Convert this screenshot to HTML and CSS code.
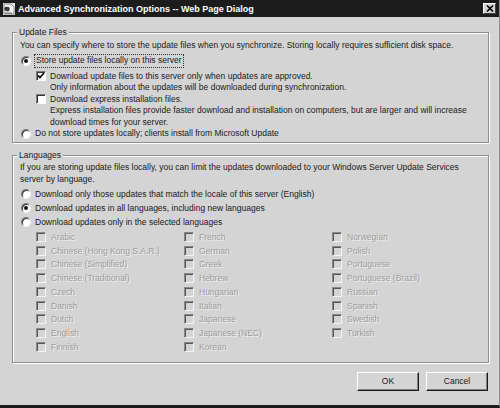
FILE: index.html
```html
<!DOCTYPE html>
<html lang="en">
<head>
    <meta charset="UTF-8">
    <title>Advanced Synchronization Options</title>
    <link rel="stylesheet" href="styles.css">
</head>

<body>
    <div class="dialog">
        <div class="titlebar">
            <svg class="app-icon" width="12" height="12" viewBox="0 0 12 12">
                <rect x="0" y="0" width="12" height="12" fill="#e4e4e4"/>
                <path d="M1 1h7l3 3v7H1z" fill="#f4f4f4" stroke="#8a8a8a" stroke-width="1"/>
                <path d="M2 6c0-2 4-2 4 0H2c0 2 3 2 4 1" fill="none" stroke="#333" stroke-width="1.4"/>
                <path d="M2 10h7" stroke="#666" stroke-width="1"/>
            </svg>
            <span class="title">Advanced Synchronization Options -- Web Page Dialog</span>
            <span class="close">
                <svg width="8" height="7" viewBox="0 0 8 7">
                    <path d="M1 0.5l6 6M7 0.5l-6 6" stroke="#000" stroke-width="1.6"/>
                </svg>
            </span>
        </div>

        <div class="content">
            <fieldset class="group files">
                <legend>Update Files</legend>
                <p class="line">You can specify where to store the update files when you synchronize. Storing locally requires sufficient disk space.</p>
                <div class="opt first">
                    <span class="radio on"></span>
                    <span class="focus">Store update files locally on this server</span>
                </div>
                <div class="sub first">
                    <span class="check on">
                        <svg width="8" height="8" viewBox="0 0 8 8"><path d="M1 3.5l2 2 4-4.5" fill="none" stroke="#000" stroke-width="1.6"/></svg>
                    </span>
                    <span>Download update files to this server only when updates are approved.</span>
                </div>
                <p class="note">Only information about the updates will be downloaded during synchronization.</p>
                <div class="sub">
                    <span class="check"></span>
                    <span>Download express installation files.</span>
                </div>
                <p class="note">Express installation files provide faster download and installation on computers, but are larger and will increase<br>download times for your server.</p>
                <div class="opt">
                    <span class="radio"></span>
                    <span>Do not store updates locally; clients install from Microsoft Update</span>
                </div>
            </fieldset>

            <fieldset class="group languages">
                <legend>Languages</legend>
                <p class="line">If you are storing update files locally, you can limit the updates downloaded to your Windows Server Update Services<br>server by language.</p>
                <div class="choices">
                    <div class="opt"><span class="radio"></span><span>Download only those updates that match the locale of this server (English)</span></div>
                    <div class="opt"><span class="radio on"></span><span>Download updates in all languages, including new languages</span></div>
                    <div class="opt"><span class="radio"></span><span>Download updates only in the selected languages</span></div>
                </div>
                <div class="lang-grid">
                    <div class="lang"><span class="check off"></span>Arabic</div>
                    <div class="lang"><span class="check off"></span>Chinese (Hong Kong S.A.R.)</div>
                    <div class="lang"><span class="check off"></span>Chinese (Simplified)</div>
                    <div class="lang"><span class="check off"></span>Chinese (Traditional)</div>
                    <div class="lang"><span class="check off"></span>Czech</div>
                    <div class="lang"><span class="check off"></span>Danish</div>
                    <div class="lang"><span class="check off"></span>Dutch</div>
                    <div class="lang"><span class="check off"></span>English</div>
                    <div class="lang"><span class="check off"></span>Finnish</div>
                    <div class="lang"><span class="check off"></span>French</div>
                    <div class="lang"><span class="check off"></span>German</div>
                    <div class="lang"><span class="check off"></span>Greek</div>
                    <div class="lang"><span class="check off"></span>Hebrew</div>
                    <div class="lang"><span class="check off"></span>Hungarian</div>
                    <div class="lang"><span class="check off"></span>Italian</div>
                    <div class="lang"><span class="check off"></span>Japanese</div>
                    <div class="lang"><span class="check off"></span>Japanese (NEC)</div>
                    <div class="lang"><span class="check off"></span>Korean</div>
                    <div class="lang"><span class="check off"></span>Norwegian</div>
                    <div class="lang"><span class="check off"></span>Polish</div>
                    <div class="lang"><span class="check off"></span>Portuguese</div>
                    <div class="lang"><span class="check off"></span>Portuguese (Brazil)</div>
                    <div class="lang"><span class="check off"></span>Russian</div>
                    <div class="lang"><span class="check off"></span>Spanish</div>
                    <div class="lang"><span class="check off"></span>Swedish</div>
                    <div class="lang"><span class="check off"></span>Turkish</div>
                </div>
            </fieldset>

            <div class="buttons">
                <span class="btn">OK</span>
                <span class="btn">Cancel</span>
            </div>
        </div>
    </div>
</body>
</html>
```

FILE: styles.css
```css
* {
    box-sizing: border-box;
}

body {
    margin: 0;
    background: #d4d4d4;
    font-family: "Liberation Sans", Arial, sans-serif;
    font-size: 8.5px;
    color: #1a1a1a;
}

.dialog {
    width: 500px;
    height: 408px;
    background: #d4d4d4;
    border-right: 1px solid #8a8a8a;
    border-bottom: 3px solid #1c1c1c;
    display: flex;
    flex-direction: column;
}

/* title bar */
.titlebar {
    height: 17px;
    background: #1c1c1c;
    display: flex;
    align-items: center;
    padding: 0 3px 0 3px;
}

.app-icon {
    flex: none;
}

.title {
    flex: 1;
    margin-left: 3px;
    color: #fff;
    font-weight: bold;
    font-size: 9px;
}

.close {
    width: 13px;
    height: 11px;
    background: #d4d4d4;
    border: 1px solid;
    border-color: #fff #404040 #404040 #fff;
    display: flex;
    align-items: center;
    justify-content: center;
}

/* body */
.content {
    flex: 1;
    padding: 10px 10px 0 12px;
}

p {
    margin: 0;
}

.group {
    margin: 0;
    padding: 1px 8px 2px 7px;
    border: 1px solid #8e8e8e;
    box-shadow: inset 1px 1px #fff, 1px 1px #fff;
}

.group legend {
    padding: 0 2px;
    margin-left: -3px;
    background: #d4d4d4;
    line-height: 11.5px;
}

.line,
.note,
.opt,
.sub {
    line-height: 11.5px;
}

.opt,
.sub {
    display: flex;
    align-items: center;
}

.opt.first,
.sub.first {
    margin-top: 4px;
}

.opt .radio {
    margin: 0 4px 0 1px;
}

.sub {
    padding-left: 16px;
}

.sub .check {
    margin-right: 4px;
}

.note {
    padding-left: 30px;
}

.focus {
    outline: 1px dotted #333;
    outline-offset: 0;
    padding: 0 1px;
}

.languages {
    margin-top: 7px;
    padding-bottom: 8px;
}

.choices {
    margin-top: 2px;
}

.choices .opt {
    line-height: 14px;
}

/* classic controls */
.radio {
    flex: none;
    width: 10px;
    height: 10px;
    border-radius: 50%;
    background: #fff;
    border: 1px solid;
    border-color: #7a7a7a #f4f4f4 #f4f4f4 #7a7a7a;
    box-shadow: inset 1px 1px #333;
    display: flex;
    align-items: center;
    justify-content: center;
}

.radio.on::after {
    content: "";
    width: 4px;
    height: 4px;
    border-radius: 50%;
    background: #111;
}

.check {
    flex: none;
    width: 10px;
    height: 10px;
    background: #fff;
    border: 1px solid;
    border-color: #7a7a7a #fafafa #fafafa #7a7a7a;
    box-shadow: inset 1px 1px #333;
    display: flex;
    align-items: center;
    justify-content: center;
}

.check.off {
    background: #d4d4d4;
    border-color: #8a8a8a #f4f4f4 #f4f4f4 #8a8a8a;
    box-shadow: inset 1px 1px #555;
}

.lang-grid {
    margin-top: 1px;
    padding-left: 16px;
    display: grid;
    grid-template-columns: 148px 148px 1fr;
    grid-template-rows: repeat(9, 13.75px);
    grid-auto-flow: column;
}

.lang {
    display: flex;
    align-items: center;
    color: #9c9c9c;
    text-shadow: 1px 1px 0 #f0f0f0;
}

.lang .check {
    margin-right: 5px;
}

/* buttons */
.buttons {
    display: flex;
    justify-content: flex-end;
    gap: 7px;
    margin-top: 9px;
    padding-right: 1px;
}

.btn {
    width: 62px;
    height: 19px;
    display: flex;
    align-items: center;
    justify-content: center;
    border: 1px solid;
    border-color: #fff #1a1a1a #1a1a1a #fff;
    box-shadow: inset -1px -1px #808080;
}
```
